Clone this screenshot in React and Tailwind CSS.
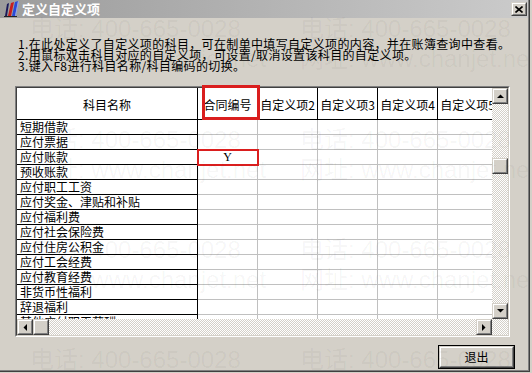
import React from 'react';

const rows = [
  '短期借款',
  '应付票据',
  '应付账款',
  '预收账款',
  '应付职工工资',
  '应付奖金、津贴和补贴',
  '应付福利费',
  '应付社会保险费',
  '应付住房公积金',
  '应付工会经费',
  '应付教育经费',
  '非货币性福利',
  '辞退福利',
  '其他应付职工薪酬',
];

const headers = ['合同编号', '自定义项2', '自定义项3', '自定义项4', '自定义项5'];

const dither =
  'bg-[image:repeating-conic-gradient(#d4d0c8_0%_25%,#ffffff_0%_50%)] bg-size-[2px_2px]';

function Raised({ className = '', children }) {
  return (
    <div className={`flex border border-t-[#d4d0c8] border-l-[#d4d0c8] border-r-[#404040] border-b-[#404040] bg-[#d4d0c8] ${className}`}>
      <div className="flex-1 flex items-center justify-center border border-t-white border-l-white border-r-[#808080] border-b-[#808080]">
        {children}
      </div>
    </div>
  );
}

function Arrow({ dir }) {
  const pts = {
    up: '0,4 7,4 3.5,0.5',
    down: '0,0 7,0 3.5,3.5',
    left: '4,0 4,7 0.5,3.5',
    right: '0,0 0,7 3.5,3.5',
  }[dir];
  const vertical = dir === 'up' || dir === 'down';
  return (
    <svg width={vertical ? 7 : 4} height={vertical ? 4 : 7} viewBox={vertical ? '0 0 7 4' : '0 0 4 7'}>
      <polygon points={pts} fill="#000" />
    </svg>
  );
}

function BooksIcon() {
  return (
    <svg width="17" height="16" viewBox="0 0 17 16">
      <polygon points="2,15 4,3 6,2 4,15" fill="#1a1a5a" />
      <polygon points="5,15 8,2 11,1 8,15" fill="#c81e1e" />
      <polygon points="9,15 12,1 15,0 12,15" fill="#2a4ad8" />
      <polygon points="12,15 15,0 16,1 13,15" fill="#8aa0f0" />
      <line x1="1" y1="15.5" x2="14" y2="15.5" stroke="#222" strokeWidth="1" />
    </svg>
  );
}

const marks = [
  { t: '电话: 400-665-0028', x: 30, y: 17 },
  { t: '电话: 400-665-0028', x: 300, y: 17 },
  { t: '网址: www.chanjet.net', x: 30, y: 47 },
  { t: '网址: www.chanjet.net', x: 300, y: 47 },
  { t: '电话: 400-665-0028', x: 30, y: 128 },
  { t: '电话: 400-665-0028', x: 300, y: 128 },
  { t: '网址: www.chanjet.net', x: 30, y: 158 },
  { t: '网址: www.chanjet.net', x: 300, y: 158 },
  { t: '电话: 400-665-0028', x: 30, y: 238 },
  { t: '电话: 400-665-0028', x: 300, y: 238 },
  { t: '网址: www.chanjet.net', x: 30, y: 268 },
  { t: '网址: www.chanjet.net', x: 300, y: 268 },
  { t: '电话: 400-665-0028', x: 30, y: 348 },
  { t: '电话: 400-665-0028', x: 300, y: 348 },
];

export default function App() {
  return (
    <div className="w-[532px] h-[373px] bg-[#d4d0c8] overflow-hidden font-['Noto_Sans_CJK_SC',sans-serif] text-[12px] text-black">
      <div className="w-[530px] h-[372px] flex border-r border-b border-[#404040]">
        <div className="relative flex-1 flex flex-col border-r border-b border-[#808080]">
          {/* title bar */}
          <div className="h-[18px] flex items-center bg-gradient-to-r from-[#9c9c9c] to-[#cbcbcb] pl-[3px] pr-[1px]">
            <BooksIcon />
            <span className="ml-[2px] text-[13px] leading-[14px] font-bold text-white">定义自定义项</span>
            <div className="ml-auto">
              <Raised className="w-[16px] h-[14px]">
                <svg width="8" height="7" viewBox="0 0 8 7">
                  <path d="M0.5 0.5 L7.5 6.5 M7.5 0.5 L0.5 6.5" stroke="#000" strokeWidth="1.6" />
                </svg>
              </Raised>
            </div>
          </div>

          {/* instructions */}
          <div className="pt-[20px] pl-[18px] leading-[11px] tracking-[0.35px] whitespace-nowrap">
            <div>1.在此处定义了自定义项的科目，可在制单中填写自定义项的内容，并在账簿查询中查看。</div>
            <div>2.用鼠标双击科目对应的自定义项，可设置/取消设置该科目的自定义项。</div>
            <div>3.键入F8进行科目名称/科目编码的切换。</div>
          </div>

          {/* grid */}
          <div className="mt-[15px] ml-[15px] w-[495px] h-[251px] flex border border-t-[#808080] border-l-[#808080] border-r-white border-b-white">
            <div className="flex-1 grid grid-cols-[475px_16px] grid-rows-[231px_16px] border border-t-[#404040] border-l-[#404040] border-r-[#d4d0c8] border-b-[#d4d0c8]">
              <div className="bg-white overflow-hidden">
                <div className="flex h-[32px] border-b border-black w-max">
                  <div className="w-[181px] border-r border-black flex items-center justify-center pt-[3px]">科目名称</div>
                  {headers.map((h) => (
                    <div key={h} className="w-[60px] border-r border-black flex items-center justify-center pt-[3px] whitespace-nowrap">
                      {h}
                    </div>
                  ))}
                </div>
                {rows.map((r, i) => (
                  <div key={r} className="flex h-[15px] w-max">
                    <div className="w-[181px] border-r border-b border-black pl-[3px] leading-[14px] whitespace-nowrap">{r}</div>
                    {headers.map((h, j) => (
                      <div key={h} className="w-[60px] border-r border-b border-[#c0c0c0] flex items-center justify-center font-['Liberation_Serif',serif] leading-[14px]">
                        {i === 2 && j === 0 ? 'Y' : ''}
                      </div>
                    ))}
                  </div>
                ))}
              </div>

              {/* vertical scrollbar */}
              <div className="flex flex-col">
                <Raised className="h-[16px]"><Arrow dir="up" /></Raised>
                <div className={`flex-1 pt-[54px] ${dither}`}>
                  <Raised className="h-[16px]" />
                </div>
                <Raised className="h-[16px]"><Arrow dir="down" /></Raised>
              </div>

              {/* horizontal scrollbar */}
              <div className="flex">
                <Raised className="w-[16px]"><Arrow dir="left" /></Raised>
                <Raised className="w-[16px]" />
                <div className={`flex-1 ${dither}`} />
                <Raised className="w-[16px]"><Arrow dir="right" /></Raised>
              </div>
              <div className={dither} />
            </div>
          </div>

          {/* exit button */}
          <div className="mt-[8px] flex justify-end pr-[13px]">
            <div className="w-[77px] h-[24px] flex border border-black">
              <Raised className="flex-1">
                <span className="leading-[14px]">退出</span>
              </Raised>
            </div>
          </div>

          {/* red highlight boxes */}
          <div className="absolute left-[202px] top-[85px] w-[58px] h-[35px] border-[3px] border-[#da1e1e]" />
          <div className="absolute left-[197px] top-[149px] w-[62px] h-[17px] border-2 border-[#da1e1e]" />

          {/* watermark */}
          <div className="absolute inset-0 pointer-events-none overflow-hidden font-['Liberation_Sans','Noto_Sans_CJK_SC',sans-serif] text-[24px] leading-[24px] text-black/[0.045]">
            {marks.map((m, i) => (
              <span key={i} className="absolute whitespace-nowrap" style={{ left: m.x, top: m.y }}>
                {m.t}
              </span>
            ))}
          </div>
        </div>
      </div>
    </div>
  );
}
